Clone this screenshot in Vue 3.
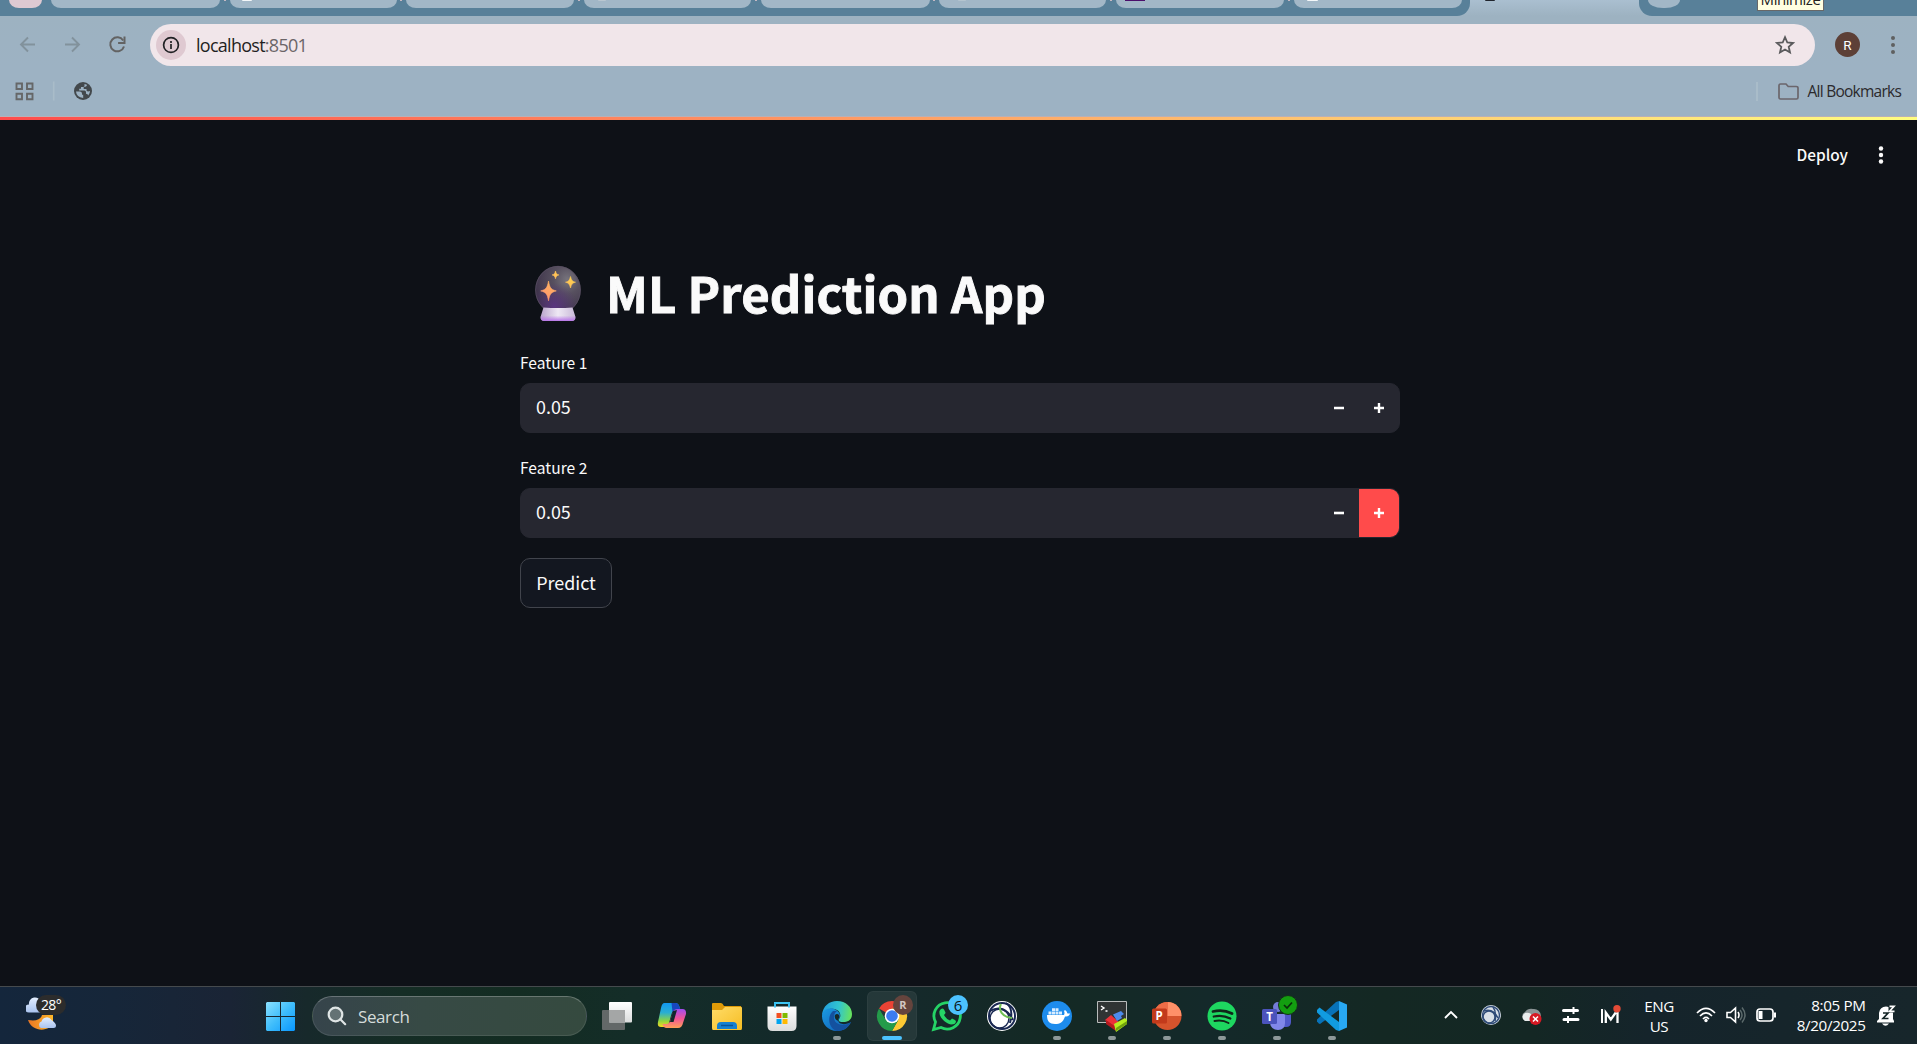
<script setup>
const tabs = [
  { w: 169 }, { w: 167, icon: '#f4f7f9', ix: 12, iw: 10 }, { w: 168 }, { w: 167, icon: '#b9c6d0', ix: 14, iw: 8 }, { w: 169 },
  { w: 167, icon: '#b4c4cf', ix: 19, iw: 8 }, { w: 168, icon: '#4b0f6b', ix: 9, iw: 20, sq: true }, { w: 168, icon: '#f4f7f9', ix: 13, iw: 11 },
]
const fields = [
  { label: 'Feature 1', value: '0.05', active: false },
  { label: 'Feature 2', value: '0.05', active: true },
]
</script>

<template>
  <div class="screen">
    <header class="browser">
      <div class="strip">
        <div class="strip-left">
          <span class="pill first"></span>
          <template v-for="(t, i) in tabs" :key="i">
            <span class="pill" :style="{ width: t.w + 'px' }">
              <i v-if="t.icon" class="fav" :class="{ sq: t.sq }" :style="{ marginLeft: t.ix + 'px', width: t.iw + 'px', background: t.icon }"></i>
            </span>
            <i v-if="i < tabs.length - 1" class="sep"></i>
          </template>
        </div>
        <div class="active-tab"><i class="fav"></i></div>
        <div class="strip-right">
          <span class="pill plus"></span>
          <span class="tip"><span>Minimize</span></span>
        </div>
      </div>

      <div class="toolbar">
        <svg class="nav" width="150" height="42" viewBox="0 0 150 42" fill="none" stroke-width="1.9">
          <path d="M35 20.5H21M28 13.5l-7 7 7 7" stroke="#82929c" />
          <path d="M65 20.5H79M72 13.5l7 7-7 7" stroke="#82929c" />
          <path d="M123.200 16.500A7 7 0 1 0 124 22.500" stroke="#636363" stroke-width="2" />
          <path d="M124.500 12.500v6.400h-6.400" stroke="#636363" stroke-width="2" />
        </svg>
        <div class="address">
          <span class="info">
            <svg width="18" height="18" viewBox="0 0 18 18"><circle cx="9" cy="9" r="7.400" fill="none" stroke="#202124" stroke-width="1.700" /><path d="M9 8v5M9 5v1.900" stroke="#202124" stroke-width="1.700" /></svg>
          </span>
          <span class="url"><b>localhost</b>:8501</span>
          <svg class="star" width="20" height="20" viewBox="0 0 20 20"><path d="M10 2.200l2.300 5.300 5.700.5-4.300 3.800 1.300 5.700L10 14.500l-5 3 1.300-5.700L2 8l5.700-.5z" fill="none" stroke="#5a5a5c" stroke-width="1.800" /></svg>
        </div>
        <span class="avatar">R</span>
        <svg class="more" width="6" height="20" viewBox="0 0 6 20" fill="#5f6060"><circle cx="3" cy="3" r="2" /><circle cx="3" cy="10" r="2" /><circle cx="3" cy="17" r="2" /></svg>
      </div>

      <div class="bookmarks">
        <svg width="100" height="24" viewBox="0 0 100 24" fill="none">
          <path d="M16.500 4.500h5.500v5.500h-5.500zM27 4.500h5.500v5.500H27zM16.500 14.700h5.500v5.500h-5.500zM27 14.700h5.500v5.500H27z" stroke="#666768" stroke-width="1.900" />
          <path d="M53.700 2.500v19" stroke="#a9bcc9" stroke-width="1.600" />
          <circle cx="83" cy="12" r="9" fill="#43484c" />
          <path d="M76 12.500h3.800q2.200 0 2.200 2v1.200h1.200v3.200Q76.500 18.500 76 12.500zM84.500 5v1.500q0 1.500-1.500 1.500h-2v1.800h-1.800v1.600h5.300q1.500 0 1.500 1.800v1.600q2 0 2.200 1.600Q90 14.800 90 12q-2.500 1-3.500-.5V10h-2.800V8q3 0 3.300-2.200z" fill="#9db2c3" />
        </svg>
        <div class="all">
          <i></i>
          <svg width="21" height="17" viewBox="0 0 21 17" fill="none"><path d="M1 14.500v-12Q1 1 2.500 1H8l2.200 2.500h8Q20 3.500 20 5v9.500q0 1.500-1.500 1.500h-16Q1 16 1 14.500z" stroke="#6b666c" stroke-width="1.700" /></svg>
          <span>All Bookmarks</span>
        </div>
      </div>
      <div class="rainbow"></div>
    </header>

    <main>
      <div class="head">
        <span>Deploy</span>
        <svg width="6" height="20" viewBox="0 0 6 20" fill="#fafafa"><circle cx="3" cy="3.500" r="2.200" /><circle cx="3" cy="10" r="2.200" /><circle cx="3" cy="16.500" r="2.200" /></svg>
      </div>
      <section class="content">
        <h1>
          <svg width="48" height="56" viewBox="0 0 48 56">
            <defs>
              <radialGradient id="ball" cx=".7" cy=".28" r=".75"><stop offset="0" stop-color="#77747d" /><stop offset=".4" stop-color="#57505f" /><stop offset="1" stop-color="#3d3249" /></radialGradient>
              <radialGradient id="glow" cx=".42" cy=".85" r=".5"><stop offset="0" stop-color="#5a3580" /><stop offset="1" stop-color="#573579" stop-opacity="0" /></radialGradient>
              <linearGradient id="base"><stop offset="0" stop-color="#b9a5cc" /><stop offset=".5" stop-color="#eee8f4" /><stop offset="1" stop-color="#c9b9d8" /></linearGradient>
              <linearGradient id="foot" x2="0" y2="1"><stop offset=".6" stop-color="#b875e8" stop-opacity="0" /><stop offset="1" stop-color="#b875e8" /></linearGradient>
              <linearGradient id="spark" x1="1" x2="0" y2="1"><stop offset="0" stop-color="#ffdd48" /><stop offset="1" stop-color="#ff8f73" /></linearGradient>
            </defs>
            <ellipse cx="23" cy="25" rx="22.700" ry="24" fill="url(#ball)" />
            <ellipse cx="23" cy="25" rx="22.400" ry="23.700" fill="url(#glow)" stroke="#5a5064" stroke-width=".7" />
            <path d="M8.500 42.500q14.500 1 29 0l3 9.500q0 4-4 4H9.500q-4 0-4-4z" fill="url(#base)" />
            <path d="M8.500 42.500q14.500 1 29 0l3 9.500q0 4-4 4H9.500q-4 0-4-4z" fill="url(#foot)" />
            <path d="M13.500 16c1.200 6.500 2.200 8.500 7.800 9.900-5.600 1.400-6.600 3.400-7.800 9.900-1.200-6.500-2.200-8.500-7.800-9.900 5.600-1.400 6.600-3.400 7.800-9.900zM35.500 11.500c.9 3.700 1.700 4.900 5 5.700-3.300.8-4.100 2-5 5.800-.9-3.800-1.700-5-5-5.800 3.300-.8 4.100-2 5-5.700zM20.500 6c.6 2.500 1.300 3.400 3.400 3.900-2.100.5-2.800 1.400-3.400 3.900-.6-2.500-1.300-3.400-3.400-3.900 2.100-.5 2.800-1.400 3.400-3.900z" fill="url(#spark)" stroke="url(#spark)" stroke-width=".6" />
          </svg>
          <span>ML Prediction App</span>
        </h1>
        <div v-for="f in fields" :key="f.label" class="field">
          <label>{{ f.label }}</label>
          <div class="input">
            <span class="val">{{ f.value }}</span>
            <button><svg width="10" height="10" viewBox="0 0 10 10"><path d="M0 5h10" stroke="#fff" stroke-width="2.600" /></svg></button>
            <button :class="{ on: f.active }"><svg width="10" height="10" viewBox="0 0 10 10"><path d="M0 5h10M5 0v10" stroke="#fff" stroke-width="2.400" /></svg></button>
          </div>
        </div>
        <button class="predict">Predict</button>
      </section>
    </main>

    <footer>
      <div class="weather">
        <svg width="46" height="38" viewBox="0 0 46 38">
          <defs><linearGradient id="moon" x2="1" y2="0"><stop stop-color="#e87524" /><stop offset="1" stop-color="#ffb829" /></linearGradient><linearGradient id="cloud" x2="0" y2="1"><stop stop-color="#e4eefe" /><stop offset="1" stop-color="#a9c3ef" /></linearGradient></defs>
          <path d="M3 17.500a4 4 0 0 1 0-8 6 6 0 0 1 12-2v10z" fill="url(#cloud)" />
          <path d="M2 25q12 2 14-5h11v7c-2 10-21 11-25-2z" fill="url(#moon)" />
          <path d="M15 33a3.500 3.500 0 0 1 .5-6.500 5.500 5.500 0 0 1 10-1.500q4.500 3 4.500 5.500 0 2.500-2.500 2.500z" fill="url(#cloud)" />
        </svg>
        <span>28°</span>
      </div>
      <svg class="start" width="29" height="29" viewBox="0 0 29 29"><defs><linearGradient id="win" x2="1" y2="1"><stop stop-color="#8be1ff" /><stop offset=".5" stop-color="#3fbdfb" /><stop offset="1" stop-color="#0897ff" /></linearGradient></defs><path d="M1 0h13v14H0V1zM15 0h13l1 1v13H15zM0 15h14v14H1l-1-1zM15 15h14v13l-1 1H15z" fill="url(#win)" /></svg>
      <div class="search">
        <svg width="20" height="20" viewBox="0 0 20 20" fill="none" stroke="#dfe5e5" stroke-width="2.200"><circle cx="8.500" cy="8.500" r="6.800" fill="#647274" /><path d="M13.300 13.300l4.900 4.900" stroke-linecap="round" /></svg>
        <span>Search</span>
      </div>
      <div class="apps">
        <svg viewBox="0 0 50 50"><defs><linearGradient id="tv" x2="0" y2="1"><stop stop-color="#fff" /><stop offset="1" stop-color="#dadcdc" /></linearGradient></defs><rect x="10" y="19" width="23" height="20" rx="1" fill="#636868" /><rect x="17" y="11" width="23" height="20.500" rx="1" fill="url(#tv)" /><rect x="17" y="19" width="16" height="12.500" fill="#a4a6a6" /></svg>
        <svg viewBox="0 0 50 50"><defs><linearGradient id="c1" x2="0" y2="1"><stop stop-color="#1197f1" /><stop offset=".4" stop-color="#2aaed2" /><stop offset=".75" stop-color="#8ed53f" /><stop offset="1" stop-color="#f8d820" /></linearGradient><linearGradient id="c2" x2="0" y2="1"><stop stop-color="#a14cf1" /><stop offset=".5" stop-color="#f05497" /><stop offset="1" stop-color="#ffa157" /></linearGradient></defs><g transform="translate(-.500 0)"><path d="M18 12h11q3 0 4 4l1 3h-5q-3 0-4 4l-2.500 9q-1 4-5 4h-3q-4 0-3-5l3-14q1-5 3.500-5z" fill="url(#c1)" /><path d="M25 12h4q3 0 4 4l1 3h-5q-2 0-3 2z" fill="#1746c0" /><path d="M31 18h5q4 0 3.500 5l-3 9q-1 5-5 5H20q-3 0-4-4h4q3 0 4-4l2.500-8q1-3 4.500-3z" fill="url(#c2)" /><path d="M26.500 20l4-1-3.500 12h-3.500z" fill="#12282b" /></g></svg>
        <svg viewBox="0 0 50 50"><defs><linearGradient id="fo" x2="1" y2="1"><stop stop-color="#ffdc68" /><stop offset="1" stop-color="#f6bd23" /></linearGradient></defs><path d="M10 19v-6q0-1 1-1h8q1.500 0 3 3h17l1 4z" fill="#df9b08" /><path d="M10 19h10l3-3h16q1 0 1 1v20q0 2-1 2H11q-1 0-1-2z" fill="url(#fo)" /><path d="M15 38v-3q0-4 4-4h12q4 0 4 4v3z" fill="#1580d0" /><path d="M19 34.500h12" stroke="#07549b" stroke-width="1.500" /></svg>
        <svg viewBox="0 0 50 50"><path d="M18 18v-6h14v6" fill="none" stroke="#3ec6f4" stroke-width="2" /><path d="M10.500 15.500h29V35q0 5-5 5h-19q-5 0-5-5z" fill="url(#tv)" /><path d="M18 12v4.500M32 12v4.500" stroke="#36bbed" stroke-width="1.800" /><path d="M19.500 22h5v5h-5z" fill="#f25022" /><path d="M25.500 22h5v5h-5z" fill="#7fba00" /><path d="M19.500 28h5v5h-5z" fill="#00a4ef" /><path d="M25.500 28h5v5h-5z" fill="#ffb900" /></svg>
        <svg viewBox="0 0 50 50"><defs><linearGradient id="ed" x1="0" y1=".4" x2="1" y2=".5"><stop stop-color="#219edf" /><stop offset=".55" stop-color="#32c5cf" /><stop offset="1" stop-color="#68e35c" /></linearGradient><linearGradient id="ee" x2="1" y2="1"><stop stop-color="#1a9be2" /><stop offset="1" stop-color="#115ab2" /></linearGradient></defs><path d="M10 24C11 15 17 10 25 10c9 0 15 6 15 13 0 6-4 8-9 8-4 0-5-1-4-3 2-2 2-7-2-9-6-3-12 0-15 5z" fill="url(#ed)" /><path d="M10 25c0-7 9-10 14-6 4 2 5 6 3 9-3 5 6 7 12 3-3 7-9 9-14 9-9 0-15-7-15-15z" fill="url(#ee)" /><path d="M21 20c-6 5-5 17 4 20 6 0 11-3 14-9-5 5-18 4-17-6q0-3 3-5z" fill="#14519f" /><path d="M27 24c1.500 3-2 4 0 6-3 0-5-3-4-6q2-2 4 0z" fill="#152929" /><rect x="21" y="45" width="8" height="4" rx="2" fill="#8d9899" /></svg>
        <svg viewBox="0 0 50 50" class="tile"><path d="M25 25L12 17.500A15 15 0 0 1 38 17.500H25z" fill="#ea4335" /><path d="M25 25V17.500h13A15 15 0 0 1 25 40l6.500-11.500z" fill="#fcc934" /><path d="M12 17.500A15 15 0 0 0 25 40l6.500-11.500L25 25l-6.500 3.500z" fill="#249b4a" /><circle cx="25" cy="25" r="7.300" fill="#fff" /><circle cx="25" cy="25" r="5.800" fill="#3b7cf1" /><circle cx="36" cy="14" r="10" fill="#65443d" /><text x="36" y="18" font-size="11" font-weight="700" fill="#d3c7c2" text-anchor="middle">R</text><rect x="15" y="45" width="20" height="4" rx="2" fill="#4cc2ff" /></svg>
        <svg viewBox="0 0 50 50"><path d="M11.500 38.500l2-7.500A13.200 13.200 0 1 1 19 36.500z" fill="none" stroke="#25d366" stroke-width="2.800" /><path d="M19 18q2-1 3 .5l1.500 3q.2 1-1.500 2.500 2 4 6 5.500l2-2q3 1 4 2.500 0 3.500-5 3.500C22 32 16.500 25 17.500 20q.5-1 1.500-2z" fill="#25d366" /><circle cx="36" cy="14" r="10" fill="#4cc2ff" /><text x="36" y="19.500" font-size="15" fill="#0b171b" text-anchor="middle">6</text></svg>
        <svg viewBox="0 0 50 50"><circle cx="25" cy="25" r="15" fill="#fff" /><g fill="none" stroke-width="2"><circle cx="25" cy="25" r="13" stroke="#192852" /><circle cx="22.500" cy="27.500" r="9.500" stroke="#192852" stroke-width="1.500" /><path d="M13 20q14-8 23 9M29 12q8 5 4 20" stroke="#192852" /><path d="M24 13c-3 6 1 13 11 14" stroke="#70bf54" /></g></svg>
        <svg viewBox="0 0 50 50"><circle cx="25" cy="25" r="15" fill="#1d8ced" /><path d="M15 24h17q1-2 0-4l1-1q2 1 2.500 3.500h2.500c-1 3-3 3-5 3-2 6-5 7.500-10 7.500-6 0-8-3-8-9z" fill="#fff" /><path d="M16.500 20.500h3v3h-3zM20 20.500h3v3h-3zM23.500 20.500h3v3h-3zM27 20.500h3v3h-3zM20 17.300h3v2.700h-3zM23.500 17.300h3v2.700h-3z" fill="#d9edff" /><rect x="21" y="45" width="8" height="4" rx="2" fill="#8d9899" /></svg>
        <svg viewBox="0 0 50 50"><path d="M10.500 10.500h29v21h-29z" fill="#303434" stroke="#b9bcbc" /><path d="M14 15l3 2-3 2M18.500 20h2" fill="none" stroke="#fff" stroke-width="1.400" /><path d="M18 29l6-5 11 10-6 5z" fill="#ec3038" /><path d="M19 29v4l10 7v-4z" fill="#b41b20" /><path d="M26 23.500l8-3.500 3 3-3 2 1 2-5 3z" fill="#4d8aec" /><path d="M27 33l11-6 2 2v4l-11 8z" fill="#b6ee20" /><path d="M29 37l11-7v3l-11 7z" fill="#70a20e" /><rect x="21" y="45" width="8" height="4" rx="2" fill="#8d9899" /></svg>
        <svg viewBox="0 0 50 50"><circle cx="25.500" cy="25" r="14" fill="#d6532c" /><path d="M25.500 25V11a14 14 0 0 1 14 14z" fill="#ff9068" /><path d="M25.500 25V11a14 14 0 0 0-14 14z" fill="#ed6c47" /><rect x="10" y="17.500" width="15" height="15" rx="1.500" fill="#c23a1b" /><text x="17.200" y="29" font-size="11.500" font-weight="700" fill="#fff" text-anchor="middle">P</text><rect x="21" y="45" width="8" height="4" rx="2" fill="#8d9899" /></svg>
        <svg viewBox="0 0 50 50"><circle cx="25" cy="25" r="14.500" fill="#1ed760" /><g fill="none" stroke="#102719" stroke-linecap="round"><path d="M16 20.500q10-2.500 19 2" stroke-width="2.800" /><path d="M16.800 25.500q9-2 16.500 2" stroke-width="2.300" /><path d="M17.500 30q8-1.500 14 2" stroke-width="1.900" /></g><rect x="21" y="45" width="8" height="4" rx="2" fill="#8d9899" /></svg>
        <svg viewBox="0 0 50 50"><circle cx="26" cy="16" r="5" fill="#737ad7" /><path d="M31 23h8v8q0 5-5 5h-3z" fill="#5059c9" /><path d="M18 23h15v9q0 7-7 7t-8-7z" fill="#8187e9" /><rect x="10" y="18" width="15" height="15" rx="1.500" fill="#4b53bc" /><text x="17.500" y="29.500" font-size="11.500" font-weight="700" fill="#fff" text-anchor="middle">T</text><circle cx="36" cy="14" r="9.500" fill="#139e10" stroke="#133119" /><path d="M32 14l3 3 5-5.500" stroke="#092e0b" stroke-width="1.700" fill="none" /><rect x="21" y="45" width="8" height="4" rx="2" fill="#8d9899" /></svg>
        <svg viewBox="0 0 50 50"><path d="M10 28.500L29 11l3-1v9L13 33q-1 0-3-2.500z" fill="#0872b8" /><path d="M10 19l2.500-2.500L32 31v9l-3-1L10 21.500z" fill="#119be0" /><path d="M32 10l8 3.500V36.500L32 40z" fill="#28a8f3" /><rect x="21" y="45" width="8" height="4" rx="2" fill="#8d9899" /></svg>
      </div>
      <div class="tray">
        <svg width="200" height="40" viewBox="0 0 200 40">
          <path d="M15 23l6-6 6 6" stroke="#fff" stroke-width="1.900" fill="none" />
          <circle cx="61" cy="20" r="10" fill="#d9e0e8" /><g fill="none" stroke="#304c78" stroke-width="1.500"><circle cx="61" cy="20" r="8.500" /><circle cx="59" cy="22" r="6" /><path d="M54 16q9-3 14 7M63 12q4 5 2 14" /></g>
          <g transform="translate(-10 0)">
            <path d="M108 26h-3a5 5 0 0 1 0-9q3-4 8-3a7 7 0 0 1 8 7v5z" fill="#8b9496" /><path d="M105 26a4.500 4.500 0 0 1 0-8q6-1 7 3v5z" fill="#e9eded" /><circle cx="115.500" cy="24" r="6" fill="#d71924" /><path d="M113 21.500l5 5M118 21.500l-5 5" stroke="#fff" stroke-width="1.500" />
            <path d="M143.500 15.500h14M144 24.500h14" stroke="#fff" stroke-width="3" stroke-linecap="round" /><path d="M153.500 12v7M148 21v7" stroke="#fff" stroke-width="2" />
            <path d="M182 14v14" fill="none" stroke="#fff" stroke-width="2" /><path d="M185.800 28V17.500l5 7 5-7M197.500 28V17" fill="none" stroke="#fff" stroke-width="2.300" />
            <circle cx="197" cy="13.700" r="3.700" fill="#e34b37" />
          </g>
        </svg>
        <div class="lang"><span>ENG</span><span>US</span></div>
        <svg class="status" width="86" height="40" viewBox="0 0 86 40" fill="none" stroke="#fff" stroke-width="1.700">
          <path d="M1 18q9-9 18 0M4 21q6-6 12 0M7 24q3-3 6 0" /><circle cx="10" cy="25.500" r="1.700" fill="#fff" stroke="none" />
          <path d="M31 17.500h3.500l5-4.500v14l-5-4.500H31zM42 17q2 3 0 6" stroke-width="1.600" /><path d="M44 15q4 5 0 10M46 12.500q6 7.500 0 15" stroke="#5c6a6b" stroke-width="1.500" />
          <rect x="61" y="14" width="16" height="12" rx="3" /><rect x="62.500" y="16" width="4" height="8" fill="#fff" stroke="none" /><path d="M79 17.500v5" stroke-width="2" />
        </svg>
        <div class="clock"><span>8:05 PM</span><span>8/20/2025</span></div>
        <svg class="bell" width="20" height="22" viewBox="0 0 20 22"><path d="M2 14V8q1-6.500 7-6.500T16 8v6l1 2v1.500H0V16zM5 18.500h7q-3.500 4.500-7 0z" fill="#fff" /><path d="M11.500 0H20v7.500h-8.500z" fill="#162629" /><path d="M12.500 1.300h4.500l-4.500 5h5" fill="none" stroke="#fff" stroke-width="1.700" /><path d="M6 8h5l-5 5.500h5.500" fill="none" stroke="#152526" stroke-width="1.700" /></svg>
      </div>
    </footer>
  </div>
</template>

<style>
body { margin: 0; background: #0e1117; }
</style>
<style scoped>
* { box-sizing: border-box; }
.screen { width: 1917px; height: 1044px; overflow: hidden; display: flex; flex-direction: column; background: #0e1117; font-family: "Open Sans", "Noto Sans", sans-serif; }
svg { display: block; flex: none; }
button { border: 0; padding: 0; background: none; font: inherit; color: inherit; }
.browser { height: 120px; background: #9db2c3; flex: none; display: flex; flex-direction: column; }
.strip { height: 16px; display: flex; background: linear-gradient(#aabfd0, #9db2c1); }
.strip-left { width: 1470px; height: 16px; padding-left: 9px; background: #588099; border-radius: 0 0 13px 0; display: flex; }
.pill { height: 8px; flex: none; background: #a2b7c7; border-radius: 0 0 10px 10px / 0 0 8px 8px; overflow: hidden; }
.pill.first { width: 33px; background: #dec9d2; margin-right: 9px; }
.fav { display: block; height: 1px; border-radius: 0 0 4px 4px; }
.fav.sq { border-radius: 0; }
.sep { width: 2px; height: 1px; margin: 0 4px 0 3.700px; background: #c5b9c4; flex: none; }
.active-tab { width: 169px; flex: none; }
.active-tab .fav { width: 10px; background: #20242c; margin-left: 15px; }
.strip-right { flex: 1; height: 16px; background: #588099; border-radius: 0 0 0 13px; padding-left: 9px; display: flex; }
.pill.plus { width: 32px; border-radius: 0 0 15px 15px / 0 0 8px 8px; }
.tip { width: 67px; height: 11px; margin-left: 77px; background: #ffffe1; border: 1px solid #686868; border-top: 0; overflow: hidden; color: #222; font-size: 15px; display: flex; align-items: flex-end; justify-content: center; line-height: 15px; }
.tip span { letter-spacing: -.45px; margin-bottom: 3px; }
.toolbar { height: 50px; padding-top: 8px; display: flex; background: linear-gradient(#9db2c1, #9db2c3); }
.address { width: 1665px; height: 42px; border-radius: 21px; background: #f1e6ea; display: flex; align-items: center; padding-left: 6px; flex: none; }
.info { width: 30px; height: 30px; border-radius: 50%; background: #dfc9d1; display: flex; align-items: center; justify-content: center; }
.url { margin-left: 10px; font-size: 18px; line-height: 24px; color: #6b6568; letter-spacing: -.73px; }
.url b { font-weight: 400; color: #1f1f22; }
.star { margin-left: auto; margin-right: 20px; }
.avatar { width: 25px; height: 25px; margin: 8px 0 0 20px; border-radius: 50%; background: #5d4037; color: #fff; font: 13.500px/26px Roboto, sans-serif; text-align: center; }
.more { margin: 11px 0 0 29.500px; }
.bookmarks { height: 50px; padding-top: 13px; display: flex; justify-content: space-between; }
.all { height: 24px; display: flex; align-items: center; width: 161.500px; font-size: 15.500px; line-height: 20px; color: #2b292c; }
.all i { width: 2px; height: 19px; background: #a9bcc9; margin-right: 20px; }
.all span { margin: -1px 0 0 9px; letter-spacing: -.75px; white-space: nowrap; }
.rainbow { height: 4px; border-top: 1px solid #b9b0b7; background: linear-gradient(90deg, #ff4b4b, #fffd80) padding-box; }
main { height: 866px; flex: none; font-family: "Noto Sans CJK SC", "Noto Sans", sans-serif; color: #fafafa; }
.head { height: 70px; display: flex; justify-content: flex-end; align-items: center; padding-right: 33.500px; font-size: 15.400px; font-weight: 500; }
.head span { margin-top: -2px; }
.head svg { margin-left: 29.500px; }
.content { width: 880px; margin-left: 520px; padding-top: 67px; display: flex; flex-direction: column; align-items: flex-start; }
h1 { margin: 0; height: 91px; padding: 8px 0 0 15px; display: flex; font-size: 49px; line-height: 54px; font-weight: 700; white-space: nowrap; }
h1 span { margin-left: 23px; letter-spacing: .1px; -webkit-text-stroke: .9px #fafafa; }
.field { width: 880px; margin-bottom: 20px; }
label { display: block; height: 35px; font-size: 15.600px; line-height: 28px; }
.input { height: 50px; border-radius: 10px; border: 1px solid #262730; background: #262730; display: flex; overflow: hidden; }
.input button { width: 40px; display: flex; align-items: center; justify-content: center; }
.input button.on { background: #ff4b4b; }
.val { flex: 1; padding-left: 15px; font-size: 17.900px; line-height: 44px; }
.predict { width: 92px; height: 50px; padding-bottom: 3px; border: 1px solid #41444c; border-radius: 10px; background: #131720; font-size: 17.900px; line-height: 44px; }
footer { height: 58px; flex: none; border-top: 1px solid #454a4d; display: flex; color: #fff; background: linear-gradient(90deg, #14263c 0, #162639 6%, #1a2435 12%, #17292b 16%, #152d25 21%, #132c22 27%, #142d28 33%, #13292a 42%, #15292b 47%, #142924 55%, #14292a 63%, #142823 72%, #142724 80%, #15242b 86%, #17262b 100%); }
.weather { width: 46px; height: 38px; margin: 8px 0 0 26px; position: relative; }
.weather span { position: absolute; left: 10px; top: 0; width: 30px; height: 20px; border-radius: 10px; background: #2c2c2c; font-size: 14px; line-height: 20px; text-align: center; letter-spacing: -.7px; }
.start { margin: 15px 0 0 194px; }
.search { width: 275px; height: 40px; margin: 9px 0 0 17px; border-radius: 20px; border: 1px solid #ffffff18; border-top-color: #ffffff40; background: linear-gradient(90deg, #36444b, #374a45 40%, #354a3f); display: flex; align-items: center; padding-left: 14px; color: #d5dcda; font-size: 17px; }
.search span { margin-left: 11px; letter-spacing: -.4px; }
.apps { display: flex; margin: 4px 0 0 5px; gap: 5px; }
.apps svg { width: 50px; height: 50px; }
.tile { border-radius: 6px; background: #ffffff12; box-shadow: inset 0 0 0 1px #ffffff0a; }
.tray { margin-left: 73px; display: flex; padding-top: 8px; font-size: 15.200px; line-height: 20px; white-space: nowrap; letter-spacing: -.5px; }
.lang { width: 44px; margin: 1px 0 0 7px; display: flex; flex-direction: column; align-items: center; }
.status { margin-left: 14.500px; }
.clock { width: 84px; display: flex; flex-direction: column; align-items: flex-end; letter-spacing: -.35px; }
.bell { margin: 10px 0 0 11px; }
</style>
